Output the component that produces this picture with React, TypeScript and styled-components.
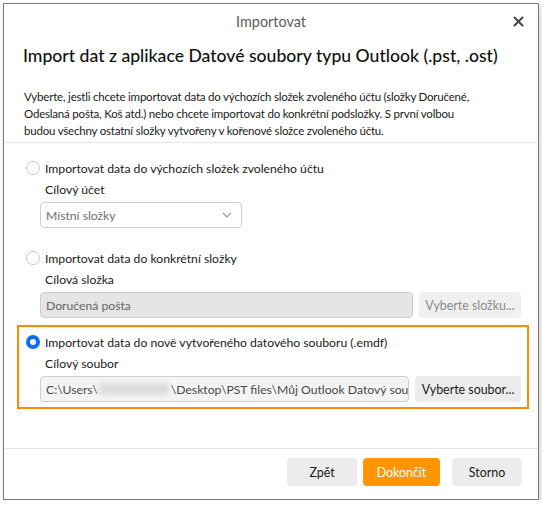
import React from "react";
import styled, { createGlobalStyle } from "styled-components";

const GlobalStyle = createGlobalStyle`
  html, body {
    margin: 0;
    padding: 0;
    background: #ffffff;
  }
  body {
    font-family: Lato, "Noto Sans", "Liberation Sans", sans-serif;
    color: #1a1a1a;
  }
`;

const Window = styled.div`
  margin: 3px 0 0 3px;
  width: 534px;
  height: 495px;
  border: 1px solid #7a7a7a;
  background: #ffffff;
  box-shadow: 2px 3px 6px rgba(0, 0, 0, 0.18);
  display: flex;
  flex-direction: column;
`;

const TitleBar = styled.div`
  height: 34px;
  display: flex;
  align-items: center;
  justify-content: center;
  position: relative;
  font-size: 14.4px;
  color: #5c5c5c;
`;

const CloseButton = styled.button`
  position: absolute;
  right: 12px;
  top: 9px;
  width: 16px;
  height: 16px;
  padding: 0;
  border: none;
  background: none;
  display: flex;
  align-items: center;
  justify-content: center;
  cursor: pointer;
`;

const Heading = styled.h1`
  margin: 6px 0 0;
  padding: 0 19px;
  font-size: 17.6px;
  line-height: 24px;
  font-weight: 500;
  white-space: nowrap;
  color: #111;
`;

const Description = styled.p`
  margin: 20px 0 0;
  padding: 0 20px 3px;
  font-size: 11.5px;
  letter-spacing: -0.2px;
  line-height: 17px;
  white-space: nowrap;
  color: #1a1a1a;
`;

const Separator = styled.div`
  height: 1px;
  background: #e6e6e6;
`;

const Content = styled.div`
  flex: 1;
  padding: 8px 9px 0 13px;
  display: flex;
  flex-direction: column;
`;

const Option = styled.div<{ $active?: boolean }>`
  border: 2px solid ${(p) => (p.$active ? "#ff8a00" : "transparent")};
  padding: 5px 6px 5px 7px;
  display: flex;
  flex-direction: column;

  &:first-child {
    margin-bottom: 6px;
  }
`;

const RadioRow = styled.label`
  height: 20px;
  display: flex;
  align-items: center;
  gap: 5px;
  font-size: 12.2px;
  color: #1a1a1a;
  cursor: pointer;
`;

const Radio = styled.span<{ $checked?: boolean }>`
  width: 14px;
  height: 14px;
  border-radius: 50%;
  box-sizing: border-box;
  flex-shrink: 0;
  border: ${(p) => (p.$checked ? "4px solid #0b6cf4" : "1px solid #c9c9c9")};
  background: #ffffff;
`;

const FieldLabel = styled.div`
  height: 20px;
  margin-top: 1px;
  padding-left: 19px;
  display: flex;
  align-items: center;
  font-size: 12.2px;
  color: #1a1a1a;
`;

const FieldRow = styled.div`
  margin-top: 3px;
  padding-left: 14px;
  display: flex;
  gap: 6px;
`;

const Select = styled.div`
  width: 202px;
  height: 26px;
  box-sizing: border-box;
  border: 1px solid #cfcfcf;
  border-radius: 4px;
  padding: 0 9px 0 5px;
  display: flex;
  align-items: center;
  justify-content: space-between;
  font-size: 12.2px;
  color: #707070;
`;

const TextInput = styled.div<{ $disabled?: boolean }>`
  flex: 1;
  min-width: 0;
  height: 26px;
  box-sizing: border-box;
  border: 1px solid #cfcfcf;
  border-radius: 4px;
  padding: 0 5px;
  display: flex;
  align-items: center;
  overflow: hidden;
  white-space: pre;
  font-size: 12.2px;
  color: ${(p) => (p.$disabled ? "#666" : "#4a4a4a")};
  background: ${(p) => (p.$disabled ? "#e5e5e5" : "#f4f4f4")};
`;

const Blur = styled.span`
  display: inline-block;
  flex-shrink: 0;
  width: 70px;
  height: 12px;
  margin: 0 2px 0 1px;
  background: #dcdcdc;
  border-radius: 3px;
  filter: blur(2.5px);
`;

const Button = styled.button<{ $primary?: boolean; $disabled?: boolean; $width?: number }>`
  height: 26px;
  width: ${(p) => (p.$width ? `${p.$width}px` : "auto")};
  padding: 0;
  border: none;
  border-radius: 4px;
  font-family: inherit;
  font-size: 12.4px;
  background: ${(p) => (p.$primary ? "#ff9500" : p.$disabled ? "#f0f0f0" : "#ececec")};
  color: ${(p) => (p.$primary ? "#ffffff" : p.$disabled ? "#8a8a8a" : "#1a1a1a")};
  white-space: nowrap;
  flex-shrink: 0;
  cursor: pointer;
`;

const Footer = styled.div`
  padding: 9px 16px 13px 0;
  display: flex;
  justify-content: flex-end;
  align-items: center;
`;

const FooterButton = styled(Button)`
  height: 28px;
  margin-left: 6px;

  &:last-child {
    margin-left: 12px;
  }
`;

const Chevron = () => (
  <svg width="10" height="6" viewBox="0 0 10 6">
    <path d="M1 1l4 4 4-4" fill="none" stroke="#9a9a9a" strokeWidth="1.2" />
  </svg>
);

const CloseIcon = () => (
  <svg width="11" height="11" viewBox="0 0 11 11">
    <path d="M1.5 1.5l8 8M9.5 1.5l-8 8" stroke="#444" strokeWidth="2" strokeLinecap="round" />
  </svg>
);

export default function App() {
  return (
    <>
      <GlobalStyle />
      <Window>
        <TitleBar>
          Importovat
          <CloseButton aria-label="Zavřít">
            <CloseIcon />
          </CloseButton>
        </TitleBar>
        <Heading>Import dat z aplikace Datové soubory typu Outlook (.pst, .ost)</Heading>
        <Description>
          Vyberte, jestli chcete importovat data do výchozích složek zvoleného účtu (složky Doručené,
          <br />
          Odeslaná pošta, Koš atd.) nebo chcete importovat do konkrétní podsložky. S první volbou
          <br />
          budou všechny ostatní složky vytvořeny v kořenové složce zvoleného účtu.
        </Description>
        <Separator />
        <Content>
          <Option>
            <RadioRow>
              <Radio />
              Importovat data do výchozích složek zvoleného účtu
            </RadioRow>
            <FieldLabel>Cílový účet</FieldLabel>
            <FieldRow>
              <Select>
                Místní složky
                <Chevron />
              </Select>
            </FieldRow>
          </Option>
          <Option>
            <RadioRow>
              <Radio />
              Importovat data do konkrétní složky
            </RadioRow>
            <FieldLabel>Cílová složka</FieldLabel>
            <FieldRow>
              <TextInput $disabled>Doručená pošta</TextInput>
              <Button $disabled $width={102}>Vyberte složku...</Button>
            </FieldRow>
          </Option>
          <Option $active>
            <RadioRow>
              <Radio $checked />
              Importovat data do nově vytvořeného datového souboru (.emdf)
            </RadioRow>
            <FieldLabel>Cílový soubor</FieldLabel>
            <FieldRow>
              <TextInput>
                C:\Users\<Blur />\Desktop\PST files\Můj Outlook Datový soubor.emdf
              </TextInput>
              <Button $width={106}>Vyberte soubor...</Button>
            </FieldRow>
          </Option>
        </Content>
        <Separator />
        <Footer>
          <FooterButton $width={70}>Zpět</FooterButton>
          <FooterButton $primary $width={77}>Dokončit</FooterButton>
          <FooterButton $width={70}>Storno</FooterButton>
        </Footer>
      </Window>
    </>
  );
}
